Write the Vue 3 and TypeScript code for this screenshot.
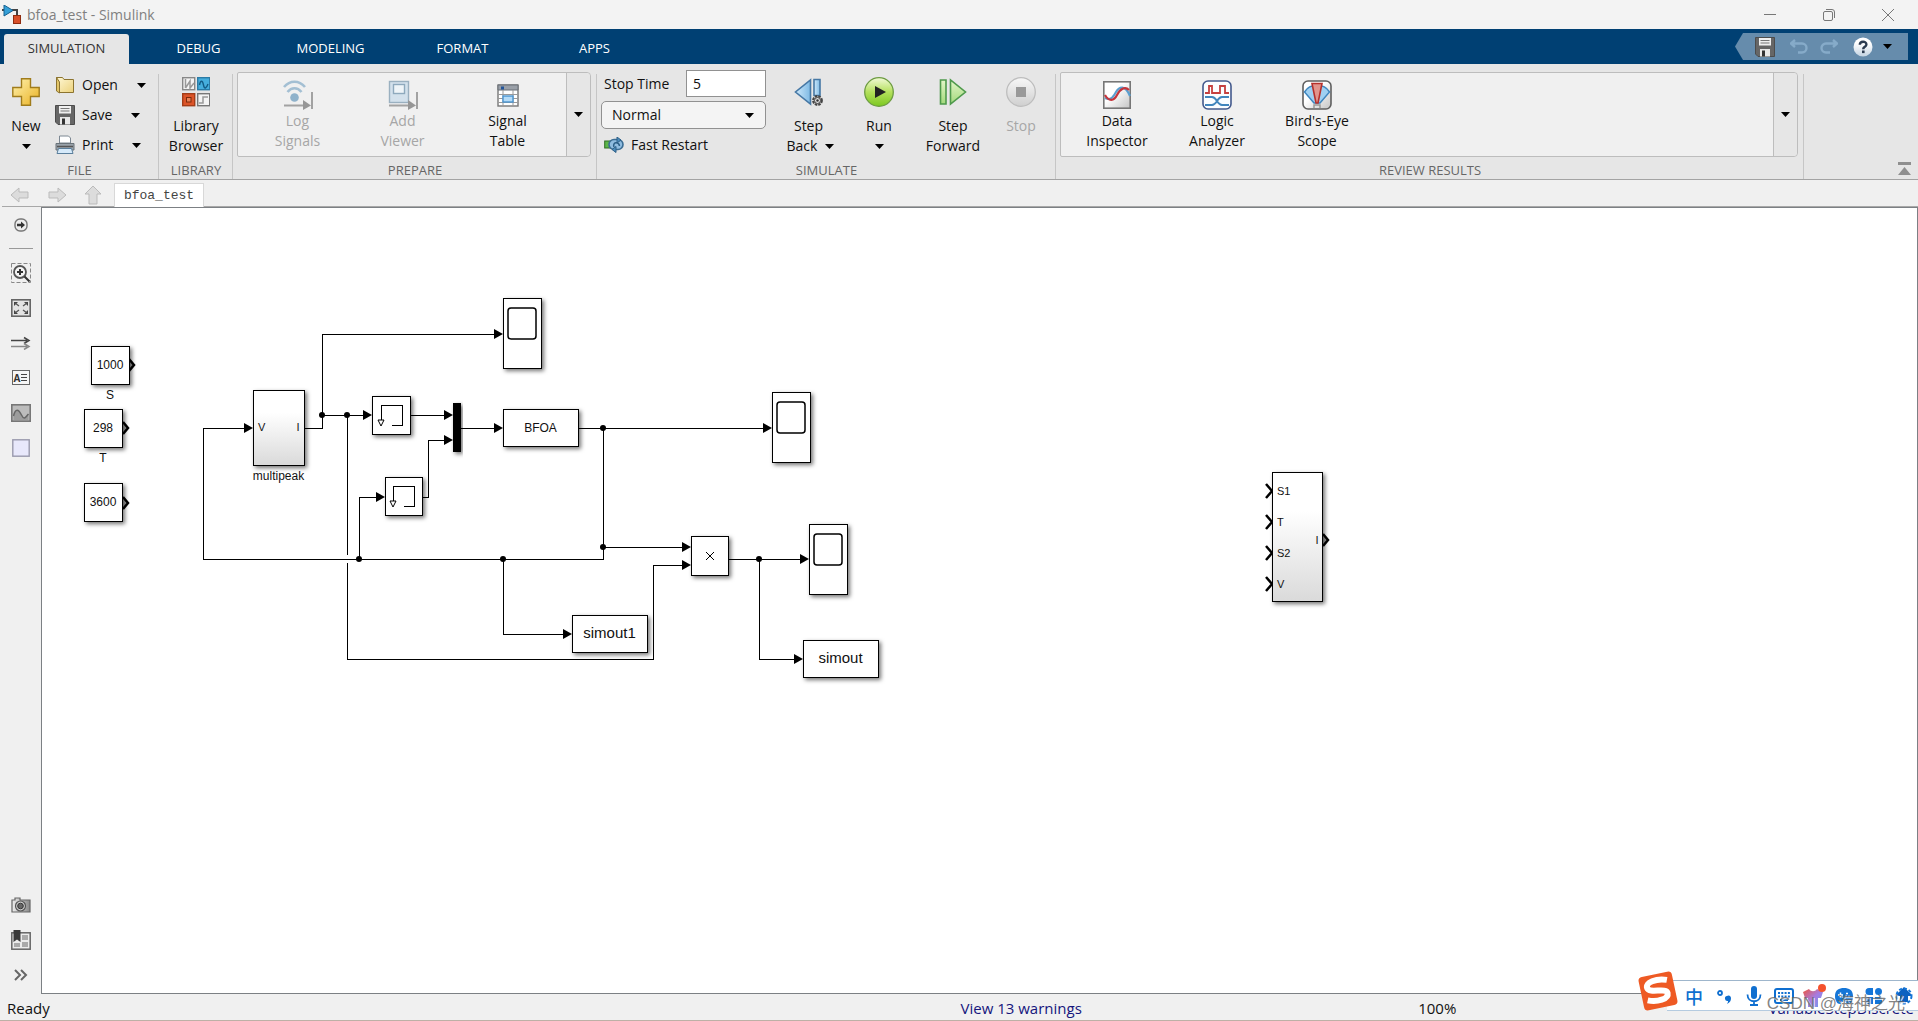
<script setup lang="ts">
import { ref } from 'vue'

interface Block {
  x: number
  y: number
  w: number
  h: number
  text?: string
  size?: number
  fill?: string
  label?: string
}
interface Point {
  x: number
  y: number
}

const tabs = ['SIMULATION', 'DEBUG', 'MODELING', 'FORMAT', 'APPS']
const activeTab = ref('SIMULATION')
const stopTime = ref('5')
const mode = ref('Normal')

const blocks: Block[] = [
  { x: 91, y: 346, w: 38, h: 38, text: '1000', size: 12, label: 'S' },
  { x: 84, y: 409, w: 38, h: 38, text: '298', size: 12, label: 'T' },
  { x: 84, y: 483, w: 38, h: 38, text: '3600', size: 12 },
  { x: 253, y: 390, w: 51, h: 75, fill: 'url(#shade)', label: 'multipeak' },
  { x: 503, y: 409, w: 75, h: 37, text: 'BFOA', size: 12 },
  { x: 572, y: 615, w: 75, h: 37, text: 'simout1', size: 15 },
  { x: 803, y: 640, w: 75, h: 37, text: 'simout', size: 15 },
  { x: 372, y: 396, w: 38, h: 38 },
  { x: 385, y: 477, w: 37, h: 38 },
  { x: 691, y: 536, w: 37, h: 39 },
  { x: 453, y: 403, w: 7, h: 48, fill: '#000' },
  { x: 1272, y: 472, w: 50, h: 129, fill: 'url(#shade)' },
]
const scopes: Point[] = [
  { x: 503, y: 298 },
  { x: 772, y: 392 },
  { x: 809, y: 524 },
]
const memories: Point[] = [
  { x: 372, y: 396 },
  { x: 384, y: 477 },
]
const wires = [
  'M304 428H322V334H498',
  'M322 415H366',
  'M410 415H448',
  'M423 497H428V440H448',
  'M461 428H498',
  'M579 428H767',
  'M603 428V559H203V428H248',
  'M359 559V497H380',
  'M347 415V555',
  'M347 563V659H653V565H686',
  'M603 547H686',
  'M503 559V634H567',
  'M729 559H805',
  'M759 559V659H798',
]
const arrows: Point[] = [
  { x: 503, y: 334 }, { x: 372, y: 415 }, { x: 453, y: 415 }, { x: 453, y: 440 },
  { x: 503, y: 428 }, { x: 772, y: 428 }, { x: 253, y: 428 }, { x: 385, y: 497 },
  { x: 691, y: 565 }, { x: 691, y: 547 }, { x: 572, y: 634 }, { x: 809, y: 559 },
  { x: 803, y: 659 },
]
const dots: Point[] = [
  { x: 322, y: 415 }, { x: 347, y: 415 }, { x: 603, y: 428 }, { x: 603, y: 547 },
  { x: 359, y: 559 }, { x: 503, y: 559 }, { x: 759, y: 559 },
]
const outPorts: Point[] = [
  { x: 129, y: 365 }, { x: 123, y: 428 }, { x: 123, y: 503 }, { x: 1323, y: 540 },
]
const inPorts = [
  { y: 491, name: 'S1' },
  { y: 522, name: 'T' },
  { y: 553, name: 'S2' },
  { y: 584, name: 'V' },
]
</script>

<template>
  <div class="window">
    <header class="titlebar">
      <svg class="app-icon" width="20" height="20" viewBox="0 0 20 20">
        <path d="M0 5h3M10 5h5v6" fill="none" stroke="#444" stroke-width="2" />
        <path d="M2 0l9 5.500l-9 5.500z" fill="#35a0d8" stroke="#17618f" />
        <rect x="11.500" y="10.500" width="7" height="8" fill="#d8502a" stroke="#8e2c10" />
      </svg>
      <h1>bfoa_test - Simulink</h1>
      <div class="win-controls">
        <button aria-label="Minimize"><svg width="12" height="12" viewBox="0 0 12 12"><path d="M0 5.500h12" /></svg></button>
        <button aria-label="Restore"><svg width="12" height="12" viewBox="0 0 12 12"><rect x=".5" y="2.500" width="9" height="9" rx="1.500" /><path d="M3 .5h6a2.500 2.500 0 0 1 2.500 2.500v6" /></svg></button>
        <button aria-label="Close"><svg width="12" height="12" viewBox="0 0 12 12"><path d="M0 0l12 12M12 0L0 12" /></svg></button>
      </div>
    </header>

    <nav class="tabs">
      <button v-for="t in tabs" :key="t" :class="{ active: t === activeTab }" @click="activeTab = t">{{ t }}</button>
      <div class="quick">
        <button class="q-save" aria-label="Save model"><svg width="20" height="20" viewBox="0 0 20 20"><use href="#floppy" /></svg></button>
        <button class="q-undo" aria-label="Undo"><svg width="18" height="16" viewBox="0 0 18 16"><path d="M5 1L1 4.500L5 8M1 4.500H12a4.500 4.500 0 0 1 0 9H8" fill="none" stroke="#86abc9" stroke-width="2.400" /></svg></button>
        <button class="q-redo" aria-label="Redo"><svg width="18" height="16" viewBox="0 0 18 16"><path d="M13 1l4 3.500L13 8M17 4.500H6a4.500 4.500 0 0 0 0 9h4" fill="none" stroke="#86abc9" stroke-width="2.400" /></svg></button>
        <button class="q-help" aria-label="Help"><svg width="20" height="20" viewBox="0 0 20 20"><circle cx="10" cy="10" r="9.500" fill="url(#ball)" /><path d="M6.800 7.800c0-4 6.600-4 6.600-.4c0 2.400-3.200 2.400-3.200 4.800" fill="none" stroke="#2b3b50" stroke-width="2.400" /><rect x="9" y="13.500" width="2.600" height="2.600" fill="#2b3b50" /></svg></button>
        <button class="q-more" aria-label="More"><svg class="caret" width="9" height="5" viewBox="0 0 9 5"><path d="M0 0h9L4.500 5z" /></svg></button>
      </div>
    </nav>

    <section class="ribbon">
      <div class="group g-file">
        <div class="body">
          <button class="big new">
            <span class="ico"><svg width="28" height="28" viewBox="0 0 28 28"><path d="M9.500 .8h9v8.700h8.700v9h-8.700v8.700h-9v-8.700H.8v-9h8.700z" fill="url(#gold)" stroke="#a07c1c" stroke-width="1.400" /></svg></span>
            <span>New</span>
            <span class="caret-line"><svg class="caret" width="9" height="5" viewBox="0 0 9 5"><path d="M0 0h9L4.500 5z" /></svg></span>
          </button>
          <div class="rows">
            <div class="row">
              <button class="small"><svg width="20" height="20" viewBox="0 0 20 20"><path d="M1.500 2.500h6l1.500 2h9.500v13h-14z" fill="url(#folder)" stroke="#8c7430" /><path d="M1.500 2.500L4.500 7v11l-3-2z" fill="#e3c66a" stroke="#8c7430" /></svg><span>Open</span></button>
              <button class="drop" aria-label="Open options"><svg class="caret" width="9" height="5" viewBox="0 0 9 5"><path d="M0 0h9L4.500 5z" /></svg></button>
            </div>
            <div class="row">
              <button class="small"><svg width="20" height="20" viewBox="0 0 20 20"><use href="#floppy" /></svg><span>Save</span></button>
              <button class="drop" aria-label="Save options"><svg class="caret" width="9" height="5" viewBox="0 0 9 5"><path d="M0 0h9L4.500 5z" /></svg></button>
            </div>
            <div class="row">
              <button class="small"><svg width="20" height="20" viewBox="0 0 20 20"><path d="M4.500 8V1h9l2 2v5z" fill="#fff" stroke="#7d8893" /><path d="M1 8.500h18v6.500H1z" fill="#9aa3aa" stroke="#6a737a" /><path d="M2 11.500h16" stroke="#555" stroke-width="1.500" /><path d="M3.500 13.500h13l1.500 5h-16z" fill="#d6eafa" stroke="#5b7f9c" /></svg><span>Print</span></button>
              <button class="drop" aria-label="Print options"><svg class="caret" width="9" height="5" viewBox="0 0 9 5"><path d="M0 0h9L4.500 5z" /></svg></button>
            </div>
          </div>
        </div>
        <div class="group-name">FILE</div>
      </div>

      <div class="group g-library">
        <div class="body">
          <button class="big">
            <span class="ico"><svg width="28" height="30" viewBox="0 0 28 30">
              <rect x=".7" y=".7" width="12" height="12" fill="#f4f4f4" stroke="#888" stroke-width="1.400" /><path d="M3.500 2v9M3.500 11L8 4v7l4-5" fill="none" stroke="#999" stroke-width="1.500" />
              <rect x="15.700" y=".7" width="12" height="12" fill="#45aedd" stroke="#2b7ba6" stroke-width="1.400" /><path d="M17.500 8c1-5 3-5 4 0s3 3 4.500-1" fill="none" stroke="#135c86" stroke-width="1.400" />
              <rect x=".7" y="16.700" width="12" height="12" fill="#dc5428" stroke="#a33d18" stroke-width="1.400" /><rect x="4.500" y="20.500" width="4.500" height="4.500" fill="#e98256" stroke="#7b2a0c" />
              <rect x="15.700" y="16.700" width="12" height="12" fill="#f4f4f4" stroke="#777" stroke-width="1.400" /><path d="M17 26h4v-6h5" fill="none" stroke="#999" stroke-width="1.500" />
            </svg></span>
            <span>Library<br />Browser</span>
          </button>
        </div>
        <div class="group-name">LIBRARY</div>
      </div>

      <div class="group g-prepare">
        <div class="body">
          <div class="gallery">
            <div class="items">
              <button class="big" disabled>
                <span class="ico"><svg width="30" height="30" viewBox="0 0 30 30"><path d="M1 7c6-7 15-7 21 0M4.500 12c4-5 10-5 14 0" fill="none" stroke="#a3bfd3" stroke-width="2.600" /><circle cx="11.500" cy="17.500" r="4.300" fill="#8fb2cb" /><path d="M1 25.500h22M29 12v17" stroke="#a2a2a2" stroke-width="2" /><path d="M20 20l8 5.500l-8 4.500z" fill="#969696" /></svg></span>
                <span>Log<br />Signals</span>
              </button>
              <button class="big" disabled>
                <span class="ico"><svg width="30" height="30" viewBox="0 0 30 30"><rect x="1.500" y="1.500" width="19" height="21" fill="#d3e1ec" stroke="#9ab0c0" stroke-width="1.400" /><rect x="5.500" y="4.500" width="11" height="9" fill="#eef4f8" stroke="#8ea9bd" stroke-width="1.400" /><path d="M1 25.500h22M29 12v17" stroke="#a2a2a2" stroke-width="2" /><path d="M20 20l8 5.500l-8 4.500z" fill="#969696" /></svg></span>
                <span>Add<br />Viewer</span>
              </button>
              <button class="big">
                <span class="ico"><svg width="22" height="24" viewBox="0 0 22 24"><rect x="1" y="2" width="20" height="21" fill="#fff" stroke="#777" stroke-width="1.400" /><path d="M1 2h20v5H1z" fill="#9aa0a8" stroke="#6b7078" /><rect x="4" y="3.500" width="3" height="3" fill="#23559a" /><path d="M1 11.500h20M1 15.500h20M1 19.500h20M6 7v16M16 7v16" stroke="#999" /><rect x="6" y="13" width="10" height="6" fill="#b5dbf7" stroke="#4b94cf" stroke-width="1.400" /></svg></span>
                <span>Signal<br />Table</span>
              </button>
            </div>
            <button class="more" aria-label="More prepare tools"><svg class="caret" width="9" height="5" viewBox="0 0 9 5"><path d="M0 0h9L4.500 5z" /></svg></button>
          </div>
        </div>
        <div class="group-name">PREPARE</div>
      </div>

      <div class="group g-simulate">
        <div class="body">
          <div class="sim-form">
            <div class="stop-row"><label for="stop-time">Stop Time</label><input id="stop-time" v-model="stopTime" type="text" /></div>
            <div class="select-wrap">
              <select v-model="mode" aria-label="Simulation mode"><option>Normal</option><option>Accelerator</option><option>Rapid Accelerator</option></select>
              <svg class="caret" width="9" height="5" viewBox="0 0 9 5"><path d="M0 0h9L4.500 5z" /></svg>
            </div>
            <button class="small fast"><svg width="20" height="16" viewBox="0 0 20 16"><rect x=".7" y="4" width="6" height="7" fill="#5cb648" stroke="#2e6e22" /><rect x="5" y="2.500" width="14" height="10" rx="5" fill="#8fbce0" stroke="#3b6d94" stroke-width="1.600" /><path d="M10 10c-2-5 5-6 5.500-1" fill="none" stroke="#2c5f87" stroke-width="1.500" /><path d="M13 0l4 3l-4 3zM12 9.500v6l-4-3z" fill="#4d8dbd" stroke="#2c5f87" /></svg><span>Fast Restart</span></button>
          </div>
          <button class="big b-back">
            <span class="ico"><svg width="30" height="30" viewBox="0 0 30 30"><path d="M16.500 3v24L1.500 15z" fill="url(#blue)" stroke="#4678a5" stroke-width="1.600" /><path d="M20 2.500h6v16h-6z" fill="url(#blue)" stroke="#4678a5" stroke-width="1.600" /><circle cx="23.500" cy="23.500" r="4.400" fill="#bbb" stroke="#444" stroke-width="2" stroke-dasharray="2.500 1" /><circle cx="23.500" cy="23.500" r="3" fill="#ddd" stroke="#444" /><circle cx="23.500" cy="23.500" r="1.200" fill="#333" /></svg></span>
            <span>Step</span>
            <span class="with-caret">Back<svg class="caret" width="9" height="5" viewBox="0 0 9 5"><path d="M0 0h9L4.500 5z" /></svg></span>
          </button>
          <button class="big b-run">
            <span class="ico"><svg width="30" height="30" viewBox="0 0 30 30"><circle cx="15" cy="15" r="14.300" fill="url(#green)" stroke="#6d9c42" stroke-width="1.300" /><path d="M11 9l11 6l-11 6z" fill="#222" /></svg></span>
            <span>Run</span>
            <span class="caret-line"><svg class="caret" width="9" height="5" viewBox="0 0 9 5"><path d="M0 0h9L4.500 5z" /></svg></span>
          </button>
          <button class="big b-forward">
            <span class="ico"><svg width="30" height="30" viewBox="0 0 30 30"><path d="M2.500 3h5.500v24H2.500z" fill="url(#leaf)" stroke="#4f9a4c" stroke-width="1.600" /><path d="M12.500 3v24l15-12z" fill="url(#leaf)" stroke="#4f9a4c" stroke-width="1.600" /></svg></span>
            <span>Step<br />Forward</span>
          </button>
          <button class="big b-stop" disabled>
            <span class="ico"><svg width="30" height="30" viewBox="0 0 30 30"><circle cx="15" cy="15" r="14.300" fill="url(#mist)" stroke="#bdbdbd" stroke-width="1.300" /><rect x="10" y="10" width="10" height="10" fill="#999" /></svg></span>
            <span>Stop</span>
          </button>
        </div>
        <div class="group-name">SIMULATE</div>
      </div>

      <div class="group g-review">
        <div class="body">
          <div class="gallery">
            <div class="items">
              <button class="big">
                <span class="ico"><svg width="28" height="28" viewBox="0 0 28 28"><rect x=".8" y=".8" width="26.400" height="26.400" fill="url(#paper)" stroke="#777" stroke-width="1.600" /><path d="M2 17c6 3 8-1 11-6s9-8 14 4" fill="none" stroke="#5a9fd0" stroke-width="2.200" /><path d="M2 14c4 7 9 6 12 0s8-9 12-5" fill="none" stroke="#c5353c" stroke-width="2.200" /></svg></span>
                <span>Data<br />Inspector</span>
              </button>
              <button class="big">
                <span class="ico"><svg width="30" height="30" viewBox="0 0 30 30"><rect x="1" y="1" width="28" height="28" rx="5" fill="#fbfdff" stroke="#43598c" stroke-width="1.600" /><path d="M3 13h4V6h3v7h8V6h5v7h4" fill="none" stroke="#c5403f" stroke-width="1.800" /><path d="M3 17h7c5 0 5 8 10 8h7M3 25h7c5 0 5-8 10-8h7" fill="none" stroke="#4286bd" stroke-width="1.800" /></svg></span>
                <span>Logic<br />Analyzer</span>
              </button>
              <button class="big">
                <span class="ico"><svg width="30" height="30" viewBox="0 0 30 30"><rect x="1" y="1" width="28" height="28" rx="5" fill="url(#paper)" stroke="#5f5f5f" stroke-width="1.600" /><path d="M2.500 12C8 3 22 3 27.500 12L18 23h-6z" fill="#9fd0f2" stroke="#3f86bf" stroke-width="1.500" /><path d="M10 3.500h10L16 23h-2z" fill="#e2948c" stroke="#b5302c" stroke-width="1.600" /><path d="M12 28v-3h6v3" fill="none" stroke="#999" stroke-width="1.500" /></svg></span>
                <span>Bird's-Eye<br />Scope</span>
              </button>
            </div>
            <button class="more" aria-label="More review tools"><svg class="caret" width="9" height="5" viewBox="0 0 9 5"><path d="M0 0h9L4.500 5z" /></svg></button>
          </div>
        </div>
        <div class="group-name">REVIEW RESULTS</div>
      </div>
      <div class="ribbon-end">
        <button aria-label="Collapse toolstrip"><svg width="13" height="13" viewBox="0 0 13 13"><path d="M0 0h13v3H0zM0 13l6.500-8l6.500 8z" fill="#8f8f8f" /></svg></button>
      </div>
    </section>

    <div class="crumbs">
      <button aria-label="Back"><svg width="20" height="16" viewBox="0 0 20 16"><path d="M1 8l8-7v4h9v6H9v4z" /></svg></button>
      <button aria-label="Forward"><svg width="20" height="16" viewBox="0 0 20 16"><path d="M19 8l-8-7v4H2v6h9v4z" /></svg></button>
      <button aria-label="Up"><svg width="18" height="20" viewBox="0 0 18 20"><path d="M9 1l8 8h-4v10H5V9H1z" /></svg></button>
      <button class="doc-tab">bfoa_test</button>
    </div>

    <main class="work">
      <aside class="palette">
        <button aria-label="Hide browser"><svg width="14" height="14" viewBox="0 0 14 14"><rect x="1" y="1" width="12" height="12" rx="5" fill="#eee" stroke="#777" stroke-width="1.400" /><path d="M3 5.800h4V3.500l4 3.500l-4 3.500V8.200H3z" fill="#333" /></svg></button>
        <hr />
        <button aria-label="Zoom"><svg width="20" height="20" viewBox="0 0 20 20"><path d="M.5 .5h19v19H.5z" fill="none" stroke="#888" stroke-dasharray="4 2" /><circle cx="9" cy="9" r="6" fill="#f4f4f4" stroke="#555" stroke-width="1.800" /><path d="M6 9h6M9 6v6M13.500 13.500l5 5" stroke="#333" stroke-width="2" /></svg></button>
        <button aria-label="Fit to view"><svg width="20" height="18" viewBox="0 0 20 18"><rect x=".8" y=".8" width="18.400" height="16.400" fill="#e3e3e3" stroke="#666" stroke-width="1.600" /><path d="M3 3h4L3 7zM17 3h-4l4 4zM3 15h4l-4-4zM17 15h-4l4-4z" fill="#444" /><path d="M4 4l4 3M16 4l-4 3M4 14l4-3M16 14l-4-3" stroke="#555" stroke-width="1.300" /></svg></button>
        <button aria-label="Signal lines"><svg width="20" height="14" viewBox="0 0 20 14"><path d="M0 4.500h16M13 1.500l5 3l-5 3" fill="none" stroke="#444" stroke-width="1.500" /><path d="M0 10.500h16M13 7.500l5 3l-5 3" fill="none" stroke="#888" stroke-width="1.500" /></svg></button>
        <button class="annot" aria-label="Annotation"><b>A</b><svg width="6" height="7" viewBox="0 0 6 7"><path d="M0 .5h6M0 3.500h6M0 6.500h6" stroke="#444" /></svg></button>
        <button aria-label="Image"><svg width="20" height="18" viewBox="0 0 20 18"><rect x=".8" y=".8" width="18.400" height="16.400" fill="#bcbcbc" stroke="#777" stroke-width="1.600" /><path d="M2.500 12c2-8 5-7 8-1s4 2 7-1v6h-15z" fill="#9c9c9c" /><path d="M2.500 12c2-8 5-7 8-1s4 2 7-1" fill="none" stroke="#666" stroke-width="1.500" /></svg></button>
        <button aria-label="Area"><svg width="18" height="18" viewBox="0 0 18 18"><rect x=".8" y=".8" width="16.400" height="16.400" fill="#e8e8fb" stroke="#9999ad" stroke-width="1.400" /></svg></button>
        <div class="spring"></div>
        <button aria-label="Screenshot"><svg width="20" height="16" viewBox="0 0 20 16"><path d="M1 3h3V1h5v2h10v12H1z" fill="url(#metal)" stroke="#666" stroke-width="1.200" /><circle cx="9.500" cy="9" r="5" fill="#ccc" stroke="#555" stroke-width="1.200" /><circle cx="9.500" cy="9" r="2.800" fill="#666" stroke="#333" /></svg></button>
        <button aria-label="Views"><svg width="20" height="20" viewBox="0 0 20 20"><rect x=".8" y="2.800" width="18.400" height="16.400" fill="#ececec" stroke="#666" stroke-width="1.500" /><path d="M11 5h6v5h-6zM11 12h6v5h-6zM3 13h6v4H3z" fill="#aaa" /><path d="M2.500 0h7v12l-3.500-2.500L2.500 12z" fill="#3a3a3a" /></svg></button>
        <button aria-label="Expand"><svg width="14" height="12" viewBox="0 0 14 12"><path d="M1 1l5 5l-5 5M7 1l5 5l-5 5" fill="none" stroke="#666" stroke-width="2" /></svg></button>
      </aside>

      <div class="canvas">
        <svg class="diagram" width="1400" height="600" viewBox="42 208 1400 600">
          <defs>
            <linearGradient id="shade" x1="0" y1="0" x2="0" y2="1"><stop offset=".3" stop-color="#fff" /><stop offset="1" stop-color="#dadada" /></linearGradient>
            <filter id="drop" x="-20%" y="-20%" width="160%" height="150%"><feDropShadow dx="2" dy="2" stdDeviation="2" flood-color="#000" flood-opacity=".55" /></filter>
          </defs>
          <g fill="none" stroke="#000" shape-rendering="crispEdges"><path v-for="d in wires" :key="d" :d="d" /></g>
          <g fill="none" stroke="#000" stroke-width="2.500">
            <path v-for="p in outPorts" :key="p.x + '-' + p.y" :d="`M${p.x} ${p.y - 6}l5 6l-5 6`" fill="#aaa" />
            <path v-for="p in inPorts" :key="p.name" :d="`M1266 ${p.y - 7}l6 7l-6 7`" />
          </g>
          <g v-for="b in blocks" :key="b.x + '-' + b.y">
            <rect :x="b.x" :y="b.y" :width="b.w" :height="b.h" :fill="b.fill ?? '#fff'" stroke="#000" shape-rendering="crispEdges" filter="url(#drop)" />
            <text v-if="b.text" :x="b.x + b.w / 2" :y="b.y + b.h / 2 + 4" :font-size="b.size">{{ b.text }}</text>
            <text v-if="b.label" :x="b.x + b.w / 2" :y="b.y + b.h + 15" font-size="12">{{ b.label }}</text>
          </g>
          <g v-for="s in scopes" :key="s.x" stroke="#000">
            <rect :x="s.x" :y="s.y" width="38" height="70" fill="#fff" shape-rendering="crispEdges" filter="url(#drop)" />
            <rect :x="s.x + 5" :y="s.y + 10" width="28" height="31" rx="3" fill="#fff" stroke-width="1.500" />
          </g>
          <g v-for="m in memories" :key="m.x" fill="none" stroke="#000">
            <path :d="`M${m.x + 20} ${m.y + 29}h10v-20h-21v15`" shape-rendering="crispEdges" />
            <path :d="`M${m.x + 6} ${m.y + 24}h6l-3 6z`" fill="#fff" />
          </g>
          <path d="M706 552l8 8M714 552l-8 8" stroke="#000" />
          <path v-for="a in arrows" :key="a.x + '-' + a.y" :d="`M${a.x} ${a.y}l-9 -5v10z`" />
          <circle v-for="d in dots" :key="d.x + '-' + d.y" :cx="d.x" :cy="d.y" r="3" />
          <g font-size="11">
            <text class="start" x="258" y="431">V</text>
            <text x="298" y="431">I</text>
            <text v-for="p in inPorts" :key="p.name" class="start" x="1277" :y="p.y + 4">{{ p.name }}</text>
            <text x="1317" y="544">I</text>
          </g>
        </svg>
      </div>
    </main>

    <footer class="status">
      <span>Ready</span>
      <a href="#warnings">View 13 warnings</a>
      <span>100%</span>
      <a class="solver" href="#solver">VariableStepDiscrete</a>
    </footer>

    <div class="ime">
      <svg class="ime-logo" width="42" height="40" viewBox="0 0 42 40"><g transform="rotate(-12 21 20)"><rect x="4" y="3" width="34" height="34" rx="4" fill="#ee5a24" /><path d="M32 11C22 7 10 9 11 15s19 3 19 9s-12 7-21 3" fill="none" stroke="#fff" stroke-width="6" /></g></svg>
      <div class="ime-bar">
        <button class="zh">中</button>
        <button aria-label="Punctuation"><svg width="20" height="20" viewBox="0 0 20 20"><circle cx="6" cy="7" r="2" fill="none" stroke="#0f6fd0" stroke-width="1.800" /><path d="M13 10a2.500 2.500 0 0 1 4 2c0 3-1 4-4 6c1-2 1-2 1-3a2.500 2.500 0 0 1-1-5" fill="#0f6fd0" /></svg></button>
        <button aria-label="Voice"><svg width="20" height="20" viewBox="0 0 20 20"><rect x="7" y="0" width="6" height="13" rx="3" fill="#0f6fd0" /><path d="M3.500 8.500c0 9 13 9 13 0M10 15v4M6 19h8" fill="none" stroke="#0f6fd0" stroke-width="1.800" /></svg></button>
        <button aria-label="Keyboard"><svg width="20" height="20" viewBox="0 0 20 20"><rect x="1" y="3" width="18" height="14" rx="2" fill="none" stroke="#0f6fd0" stroke-width="2" /><path d="M4 7h12M4 10.500h12" stroke="#0f6fd0" stroke-width="2" stroke-dasharray="2 1.300" /><path d="M6 14h8" stroke="#0f6fd0" stroke-width="2" /></svg></button>
        <button aria-label="Skins"><svg width="24" height="24" viewBox="0 0 24 24"><path d="M1 8l6-3c2 3 6 3 8 0l6 3l-2 6h-3v9H6v-9H3z" fill="url(#skin)" /><circle cx="20" cy="4" r="4" fill="#f4522d" /></svg></button>
        <button aria-label="Games"><svg width="20" height="20" viewBox="0 0 20 20"><path d="M1 10C1 4 5 2 10 2s9 2 9 8c0 5-2 8-5 8c-2 0-2-3-4-3s-2 3-4 3c-3 0-5-3-5-8z" fill="#1576d8" /><path d="M4 9h5M6.500 6.500v5M12 7.500h2M14 10.500h2" stroke="#fff" stroke-width="1.500" /></svg></button>
        <button aria-label="Toolbox"><svg width="20" height="20" viewBox="0 0 20 20"><path d="M5 2h4v7H5a3.500 3.500 0 0 1 0-7M11 5.500a3.500 3.500 0 0 1 7 0a3.500 3.500 0 0 1-7 0M2 11h7v7H4a2 2 0 0 1-2-2zM11 11h5a2 2 0 0 1 2 2v3a2 2 0 0 1-2 2h-5z" fill="#1576d8" /></svg></button>
        <button aria-label="Settings"><svg width="20" height="20" viewBox="0 0 20 20"><path d="M10 1l7 7v2h-3v6H6v-6H3V8z" fill="#0d62c0" /><circle cx="10" cy="10" r="7.500" fill="none" stroke="#1576d8" stroke-width="2" stroke-dasharray="3 2" /></svg></button>
      </div>
    </div>
    <div class="watermark">CSDN @海神之光</div>

    <svg class="defs" width="0" height="0" aria-hidden="true">
      <defs>
        <linearGradient id="gold" x1="0" y1="0" x2="1" y2="1"><stop offset="0" stop-color="#fff3b0" /><stop offset="1" stop-color="#e9b021" /></linearGradient>
        <linearGradient id="folder" x1="0" y1="0" x2="1" y2="1"><stop offset="0" stop-color="#fff8d6" /><stop offset="1" stop-color="#ecd27c" /></linearGradient>
        <linearGradient id="blue" x1="0" y1="0" x2="1" y2="0"><stop offset="0" stop-color="#cfe9fb" /><stop offset="1" stop-color="#7db9e4" /></linearGradient>
        <linearGradient id="leaf" x1="0" y1="0" x2="0" y2="1"><stop offset="0" stop-color="#e3f6c8" /><stop offset="1" stop-color="#a3d97c" /></linearGradient>
        <linearGradient id="green" x1="0" y1="0" x2="0" y2="1"><stop offset="0" stop-color="#f2fad8" /><stop offset=".5" stop-color="#b4e05c" /><stop offset="1" stop-color="#7cc820" /></linearGradient>
        <linearGradient id="mist" x1="0" y1="0" x2="0" y2="1"><stop offset="0" stop-color="#f7f7f7" /><stop offset="1" stop-color="#cfcfcf" /></linearGradient>
        <linearGradient id="paper" x1="0" y1="0" x2="1" y2="1"><stop offset=".4" stop-color="#fff" /><stop offset="1" stop-color="#c4c4c4" /></linearGradient>
        <linearGradient id="ball" x1="0" y1="0" x2="0" y2="1"><stop offset=".3" stop-color="#fff" /><stop offset="1" stop-color="#c3d3e2" /></linearGradient>
        <linearGradient id="metal" x1="0" y1="0" x2="1" y2="0"><stop offset="0" stop-color="#eee" /><stop offset="1" stop-color="#888" /></linearGradient>
        <linearGradient id="skin" x1="0" y1="0" x2="1" y2="1"><stop offset="0" stop-color="#f0563c" /><stop offset=".5" stop-color="#a77be0" /><stop offset="1" stop-color="#6c9cf0" /></linearGradient>
        <g id="floppy"><path d="M.5 .5h19v19H3l-2.500-2.500z" fill="#666" stroke="#4c4c4c" /><rect x="4" y="1" width="12" height="7.500" fill="#f0f0f0" /><path d="M5.500 3.500h9M5.500 6h9" stroke="#777" /><rect x="5" y="12" width="10" height="7.500" fill="#e8e8e8" /><rect x="7" y="13.500" width="3" height="6" fill="#333" /></g>
      </defs>
    </svg>
  </div>
</template>

<style>
body {
  margin: 0;
}
</style>

<style scoped>
.window {
  position: relative;
  display: flex;
  flex-direction: column;
  min-height: 100vh;
  box-sizing: border-box;
  border-bottom: 1px solid #bdb0a6;
  background: #f0f0f0;
  color: #111;
  font: 14px/20px "Open Sans", "Noto Sans", sans-serif;
  overflow: hidden;
}
button {
  display: flex;
  align-items: center;
  margin: 0;
  padding: 0;
  border: 0;
  background: none;
  color: inherit;
  font: inherit;
}
svg {
  display: block;
  flex: none;
}
.defs {
  position: absolute;
}
.caret {
  fill: #000;
}

.titlebar {
  display: flex;
  align-items: center;
  height: 29px;
  background: #f3f3f3;
}
.app-icon {
  margin: 0 5px 0 2px;
}
h1 {
  flex: 1;
  margin: 0;
  color: #808080;
  font-size: 14px;
  font-weight: 400;
}
.win-controls {
  display: flex;
  padding-right: 1px;
}
.win-controls button {
  justify-content: center;
  width: 59px;
  height: 29px;
}
.win-controls svg {
  overflow: visible;
  fill: none;
  stroke: #777;
}

.tabs {
  display: flex;
  align-items: flex-end;
  gap: 7px;
  height: 35px;
  padding-left: 4px;
  background: #004073;
}
.tabs > button {
  justify-content: center;
  width: 125px;
  height: 30px;
  padding-bottom: 2px;
  color: #fff;
  font-size: 13px;
}
.tabs > .active {
  border-radius: 3px 3px 0 0;
  background: #e6e6e6;
  color: #333;
}
.quick {
  display: flex;
  align-self: center;
  align-items: center;
  box-sizing: border-box;
  width: 173px;
  height: 27px;
  margin: 0 10px 0 auto;
  padding-left: 20px;
  background: #668cac;
  clip-path: polygon(8px 0, 100% 0, 100% 100%, 8px 100%, 0 50%);
}
.q-undo {
  margin-left: 15px;
}
.q-redo {
  margin-left: 12px;
}
.q-help {
  margin-left: 15px;
}
.q-more {
  margin-left: 10px;
}

.ribbon {
  display: flex;
  height: 115px;
  border-bottom: 1px solid #a3a3a3;
  background: #e6e6e6;
}
.group {
  position: relative;
  display: flex;
  flex: none;
  flex-direction: column;
  box-sizing: border-box;
}
.group::after {
  position: absolute;
  top: 10px;
  right: 0;
  bottom: 0;
  width: 1px;
  background: #c6c6c6;
  content: "";
}
.body {
  display: flex;
  flex: 1;
  padding-top: 8px;
}
.group-name {
  height: 18px;
  color: #666;
  font-size: 13px;
  line-height: 18px;
  text-align: center;
}
.g-file {
  width: 159px;
}
.g-library {
  width: 74px;
}
.g-prepare {
  width: 364px;
}
.g-simulate {
  width: 459px;
}
.g-review {
  flex: 1;
}
.g-prepare .body,
.g-review .body {
  padding-right: 6px;
  padding-left: 4px;
}
.big {
  flex: none;
  flex-direction: column;
  text-align: center;
}
.big:disabled {
  color: #a6a6a6;
}
.ico {
  display: flex;
  align-items: center;
  justify-content: center;
  height: 30px;
  margin: 5px 0 9px;
}
.caret-line,
.with-caret {
  display: flex;
  align-items: center;
  gap: 8px;
  height: 20px;
}
.new {
  width: 52px;
}
.rows {
  margin: -2px 0 0 3px;
}
.row {
  display: flex;
  height: 30px;
}
.small {
  flex: none;
  gap: 7px;
}
.drop {
  padding-left: 19px;
}
.g-library .big {
  width: 100%;
}
.gallery {
  display: flex;
  flex: 1;
  box-sizing: border-box;
  height: 85px;
  border: 1px solid #bdbdbd;
  border-radius: 2px 4px 4px 2px;
  background: #f0f0f0;
}
.items {
  display: flex;
  flex: 1;
}
.items .big {
  width: 100px;
}
.g-prepare .items {
  padding-left: 7px;
}
.g-prepare .items .big {
  width: 105px;
}
.g-review .items {
  padding-left: 6px;
}
.items .ico {
  margin: 7px 0 1px;
}
.more {
  justify-content: center;
  width: 24px;
  border-left: 1px solid #bdbdbd;
  border-radius: 0 4px 4px 0;
  background: #e6e6e6;
}
.g-simulate .body {
  padding-top: 6px;
}
.sim-form {
  width: 165px;
  margin: 0 6px 0 4px;
}
.stop-row {
  display: flex;
  align-items: center;
  justify-content: space-between;
  padding-left: 3px;
}
input {
  box-sizing: border-box;
  width: 80px;
  height: 27px;
  padding: 0 6px;
  border: 1px solid #919191;
  background: #fff;
  color: inherit;
  font: inherit;
}
.select-wrap {
  position: relative;
  margin: 4px 0 6px;
}
select {
  display: block;
  box-sizing: border-box;
  width: 100%;
  height: 28px;
  padding: 0 10px;
  border: 1px solid #919191;
  border-radius: 5px;
  background: #f4f4f4;
  color: inherit;
  font: inherit;
  appearance: none;
}
.select-wrap .caret {
  position: absolute;
  top: 12px;
  right: 12px;
  pointer-events: none;
}
.fast {
  padding-left: 3px;
}
.g-simulate .ico {
  margin-top: 7px;
}
.b-back {
  width: 73px;
}
.with-caret {
  padding-left: 4px;
}
.b-run {
  width: 68px;
}
.b-forward {
  width: 80px;
}
.b-stop {
  width: 56px;
}
.ribbon-end {
  display: flex;
  align-items: flex-end;
  justify-content: flex-end;
  box-sizing: border-box;
  width: 114px;
  padding: 0 7px 4px 0;
}

.crumbs {
  display: flex;
  align-items: center;
  height: 26px;
  margin-left: 2px;
  padding-left: 8px;
  border-bottom: 1px solid #a8a8a8;
}
.crumbs button + button {
  margin-left: 17px;
}
.crumbs svg {
  margin-top: 4px;
  fill: #dcdcdc;
  stroke: #bbb;
}
.crumbs button.doc-tab {
  align-self: flex-end;
  justify-content: center;
  box-sizing: border-box;
  width: 90px;
  height: 24px;
  margin-bottom: -1px;
  margin-left: 12px;
  border: 1px solid #d8d8d8;
  border-bottom: 0;
  background: #fff;
  color: #444;
  font: 13px/20px "Liberation Mono", monospace;
}

.work {
  display: flex;
  flex: 1;
}
.palette {
  display: flex;
  flex-direction: column;
  align-items: center;
  width: 41px;
  padding-bottom: 2px;
}
.palette button {
  justify-content: center;
  width: 35px;
  height: 35px;
}
.palette hr {
  width: 24px;
  margin: 6px 0;
  border: 0;
  border-top: 1px solid #999;
}
.palette .annot {
  box-sizing: border-box;
  gap: 1px;
  width: 18px;
  height: 15px;
  margin: 10px 0;
  border: 1px solid #666;
  background: #f6f6f6;
  color: #333;
  font-size: 10px;
  line-height: 12px;
}
.spring {
  flex: 1;
}
.canvas {
  position: relative;
  flex: 1;
  min-width: 0;
  border: 1px solid #7c8084;
  background: #fff;
}
.diagram {
  position: absolute;
  top: 0;
  left: 0;
}
.diagram text {
  fill: #111;
  font-family: "Liberation Sans", Arial, sans-serif;
  text-anchor: middle;
}
.diagram .start {
  text-anchor: start;
}

.status {
  display: grid;
  grid-template-columns: 50% 24% 1fr auto;
  align-items: center;
  height: 25px;
  padding: 1px 4px 0 7px;
  font-size: 15px;
}
.status a {
  color: #15157d;
  text-decoration: none;
}

.ime {
  position: absolute;
  right: 0;
  bottom: 9px;
  display: flex;
  align-items: flex-end;
}
.ime-logo {
  z-index: 1;
  margin-right: -12px;
}
.ime-bar {
  display: flex;
  align-items: center;
  box-sizing: border-box;
  width: 251px;
  height: 31px;
  padding-left: 12px;
  border-top: 1px solid #9fb6cc;
  border-bottom: 1px solid #b5cbe0;
  background: #fff;
}
.ime-bar button {
  justify-content: center;
  width: 30px;
  flex: none;
}
.ime-bar .zh {
  color: #0f6fd0;
  font: 500 18px/20px "Noto Sans CJK SC", sans-serif;
}
.watermark {
  position: absolute;
  right: 13px;
  bottom: 6px;
  color: rgba(100, 100, 100, 0.8);
  font: 17px/20px "Liberation Sans", "Noto Sans CJK SC", sans-serif;
  text-shadow: 1px 1px 0 rgba(255, 255, 255, 0.8);
  white-space: nowrap;
}
</style>
